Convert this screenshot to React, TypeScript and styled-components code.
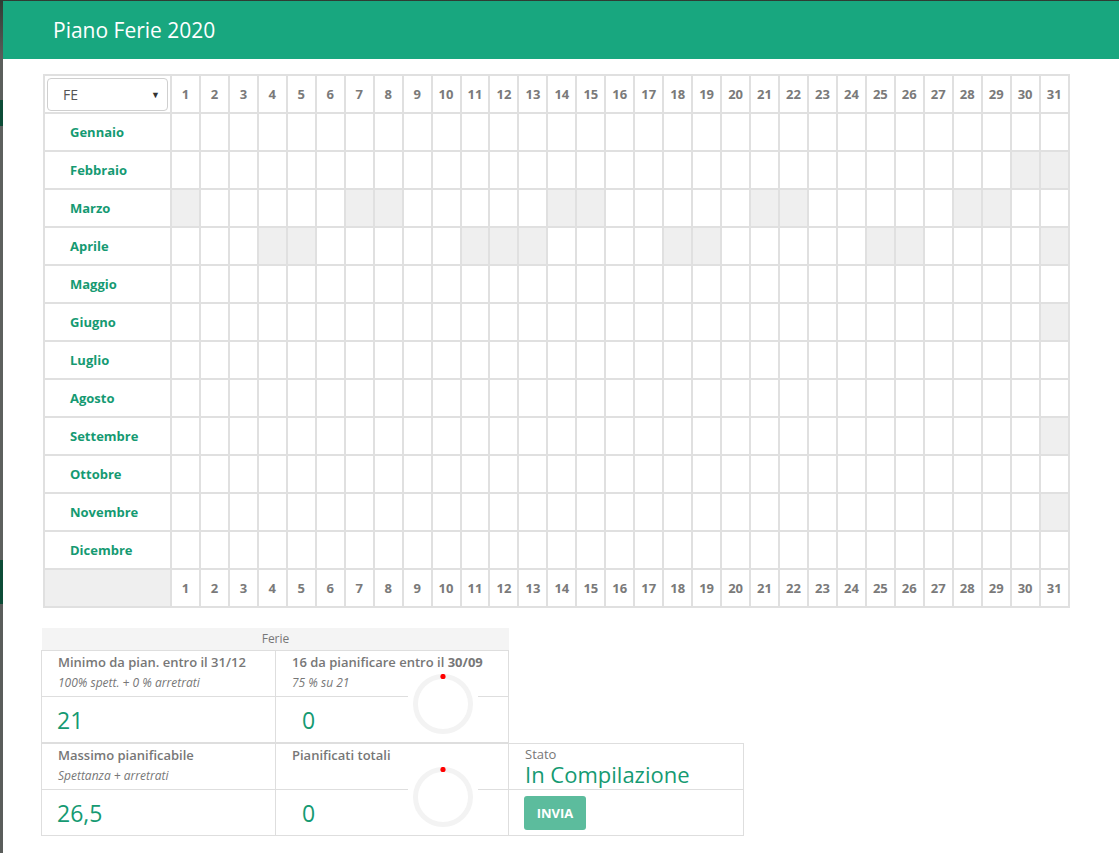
import styled, { createGlobalStyle } from "styled-components";

const GlobalStyle = createGlobalStyle`
  html, body { margin: 0; padding: 0; }
  body {
    font-family: "Open Sans", "Liberation Sans", sans-serif;
    background: #565a57;
  }
`;

const months = [
  "Gennaio",
  "Febbraio",
  "Marzo",
  "Aprile",
  "Maggio",
  "Giugno",
  "Luglio",
  "Agosto",
  "Settembre",
  "Ottobre",
  "Novembre",
  "Dicembre",
];

// giorni grigi (weekend, festivi, giorni inesistenti) per mese
const greyDays: Record<number, number[]> = {
  1: [30, 31],
  2: [1, 7, 8, 14, 15, 21, 22, 28, 29],
  3: [4, 5, 11, 12, 13, 18, 19, 25, 26, 31],
  5: [31],
  8: [31],
  10: [31],
};

const days = Array.from({ length: 31 }, (_, i) => i + 1);

const GREEN = "#18a77f";
const TEXT_GREEN = "#159a72";

export default function App() {
  return (
    <>
      <GlobalStyle />
      <Backdrop>
        <Modal>
          <Header>
            <Title>Piano Ferie 2020</Title>
          </Header>

          <Body>
            <Calendar>
              <colgroup>
                <col style={{ width: 127 }} />
                {days.map((d) => (
                  <col key={d} />
                ))}
              </colgroup>
              <tbody>
                <tr>
                  <SelectCell>
                    <FakeSelect>
                      <span>FE</span>
                      <Caret>▼</Caret>
                    </FakeSelect>
                  </SelectCell>
                  {days.map((d) => (
                    <DayHead key={d}>{d}</DayHead>
                  ))}
                </tr>
                {months.map((m, mi) => (
                  <tr key={m}>
                    <MonthCell>{m}</MonthCell>
                    {days.map((d) => (
                      <DayCell key={d} $grey={(greyDays[mi] || []).includes(d)} />
                    ))}
                  </tr>
                ))}
                <tr>
                  <DayCell $grey />
                  {days.map((d) => (
                    <DayHead key={d}>{d}</DayHead>
                  ))}
                </tr>
              </tbody>
            </Calendar>

            <Stats>
              <StatsCaption>Ferie</StatsCaption>
              <Spacer />

              <StatBox>
                <StatHead>
                  <Label>Minimo da pian. entro il 31/12</Label>
                  <Sub>100% spett. + 0 % arretrati</Sub>
                </StatHead>
                <StatValue>21</StatValue>
              </StatBox>

              <StatBox>
                <StatHead>
                  <Label>
                    16 da pianificare entro il <b>30/09</b>
                  </Label>
                  <Sub>75 % su 21</Sub>
                </StatHead>
                <StatValue $indent>0</StatValue>
                <Donut />
              </StatBox>

              <Spacer />

              <StatBox>
                <StatHead>
                  <Label>Massimo pianificabile</Label>
                  <Sub>Spettanza + arretrati</Sub>
                </StatHead>
                <StatValue>26,5</StatValue>
              </StatBox>

              <StatBox>
                <StatHead>
                  <Label>Pianificati totali</Label>
                </StatHead>
                <StatValue $indent>0</StatValue>
                <Donut />
              </StatBox>

              <StatBox>
                <StateHead>
                  <StateLabel>Stato</StateLabel>
                  <StateText>In Compilazione</StateText>
                </StateHead>
                <StateActions>
                  <SendButton type="button">INVIA</SendButton>
                </StateActions>
              </StatBox>
            </Stats>
          </Body>
        </Modal>
      </Backdrop>
    </>
  );
}

function Donut() {
  return (
    <DonutWrap>
      <svg width="60" height="60" viewBox="0 0 60 60">
        <circle cx="30" cy="30" r="27.5" fill="none" stroke="#f3f3f3" strokeWidth="5" />
        <circle cx="30" cy="2.5" r="2.6" fill="#ff0000" />
      </svg>
    </DonutWrap>
  );
}

// Styled Components
const Backdrop = styled.div`
  display: flex;
  min-height: 853px;
  padding: 1px 0 0 3px;
  box-sizing: border-box;
  background: linear-gradient(
    to bottom,
    #2f3b33 0,
    #5b5f5c 60px,
    #5b5f5c 100px,
    #0d4c37 100px,
    #0d4c37 126px,
    #5d605e 126px,
    #5d605e 560px,
    #0d4c37 560px,
    #0d4c37 604px,
    #5a5d5b 604px
  );
`;

const Modal = styled.div`
  flex: 1;
  background: #fff;
  min-height: 852px;
`;

const Header = styled.div`
  display: flex;
  align-items: center;
  height: 58px;
  padding-left: 50px;
  background: ${GREEN};
`;

const Title = styled.h1`
  margin: 0;
  font-size: 21px;
  font-weight: 400;
  color: #fff;
`;

const Body = styled.div`
  padding: 15px 0 0 40px;
`;

const Calendar = styled.table`
  width: 1027px;
  table-layout: fixed;
  border-collapse: collapse;
  border: 2px solid #e0e0e0;

  td {
    height: 36px;
    border: 2px solid #e0e0e0;
    padding: 0;
  }
`;

const SelectCell = styled.td`
  padding: 0 2px !important;
`;

const FakeSelect = styled.div`
  display: flex;
  align-items: center;
  justify-content: space-between;
  height: 31px;
  padding: 0 7px 0 15px;
  border: 1px solid #cfcfcf;
  border-radius: 4px;
  font-size: 14px;
  color: #555;
`;

const Caret = styled.span`
  font-size: 9px;
  color: #333;
`;

const DayHead = styled.td`
  text-align: center;
  font-size: 13px;
  font-weight: 700;
  color: #7a7a7a;
`;

const MonthCell = styled.td`
  padding-left: 25px !important;
  font-size: 13px;
  font-weight: 700;
  color: ${TEXT_GREEN};
`;

const DayCell = styled.td<{ $grey?: boolean }>`
  background: ${(p) => (p.$grey ? "#efefef" : "#fff")};
`;

const Stats = styled.div`
  display: grid;
  grid-template-columns: 234px 233px 235px;
  margin: 20px 0 0 -1px;
`;

const StatsCaption = styled.div`
  grid-column: 1 / 3;
  height: 22px;
  line-height: 22px;
  text-align: center;
  background: #f4f4f4;
  font-size: 12px;
  color: #777;
`;

const Spacer = styled.div``;

const StatBox = styled.div`
  position: relative;
  display: flex;
  flex-direction: column;
  box-sizing: border-box;
  height: 93px;
  border: 1px solid #dedede;
  margin-left: -1px;
`;

const StatHead = styled.div`
  height: 46px;
  box-sizing: border-box;
  padding: 2px 16px 0 16px;
  border-bottom: 1px solid #dedede;
`;

const StateHead = styled(StatHead)`
  padding-top: 3px;
`;

const Label = styled.div`
  font-size: 13px;
  font-weight: 600;
  line-height: 18px;
  color: #777;
  white-space: nowrap;

  b {
    font-weight: 700;
  }
`;

const Sub = styled.div`
  margin-top: 4px;
  font-size: 12px;
  font-style: italic;
  line-height: 16px;
  color: #777;
`;

const StatValue = styled.div<{ $indent?: boolean }>`
  flex: 1;
  display: flex;
  align-items: center;
  padding-left: ${(p) => (p.$indent ? "26px" : "15px")};
  font-size: 23px;
  color: ${TEXT_GREEN};
`;

const DonutWrap = styled.div`
  position: absolute;
  left: 132px;
  top: 18px;
  width: 70px;
  height: 70px;
  display: flex;
  align-items: center;
  justify-content: center;
  background: #fff;
`;

const StateLabel = styled.div`
  font-size: 13px;
  line-height: 15px;
  color: #777;
`;

const StateText = styled.div`
  margin-top: 1px;
  font-size: 22px;
  line-height: 23px;
  color: ${TEXT_GREEN};
`;

const StateActions = styled.div`
  padding: 6px 15px 0 15px;
`;

const SendButton = styled.button`
  width: 62px;
  height: 34px;
  border: 0;
  border-radius: 3px;
  background: #5cbc9d;
  color: #fff;
  font-family: inherit;
  font-size: 13px;
  font-weight: 700;
`;
